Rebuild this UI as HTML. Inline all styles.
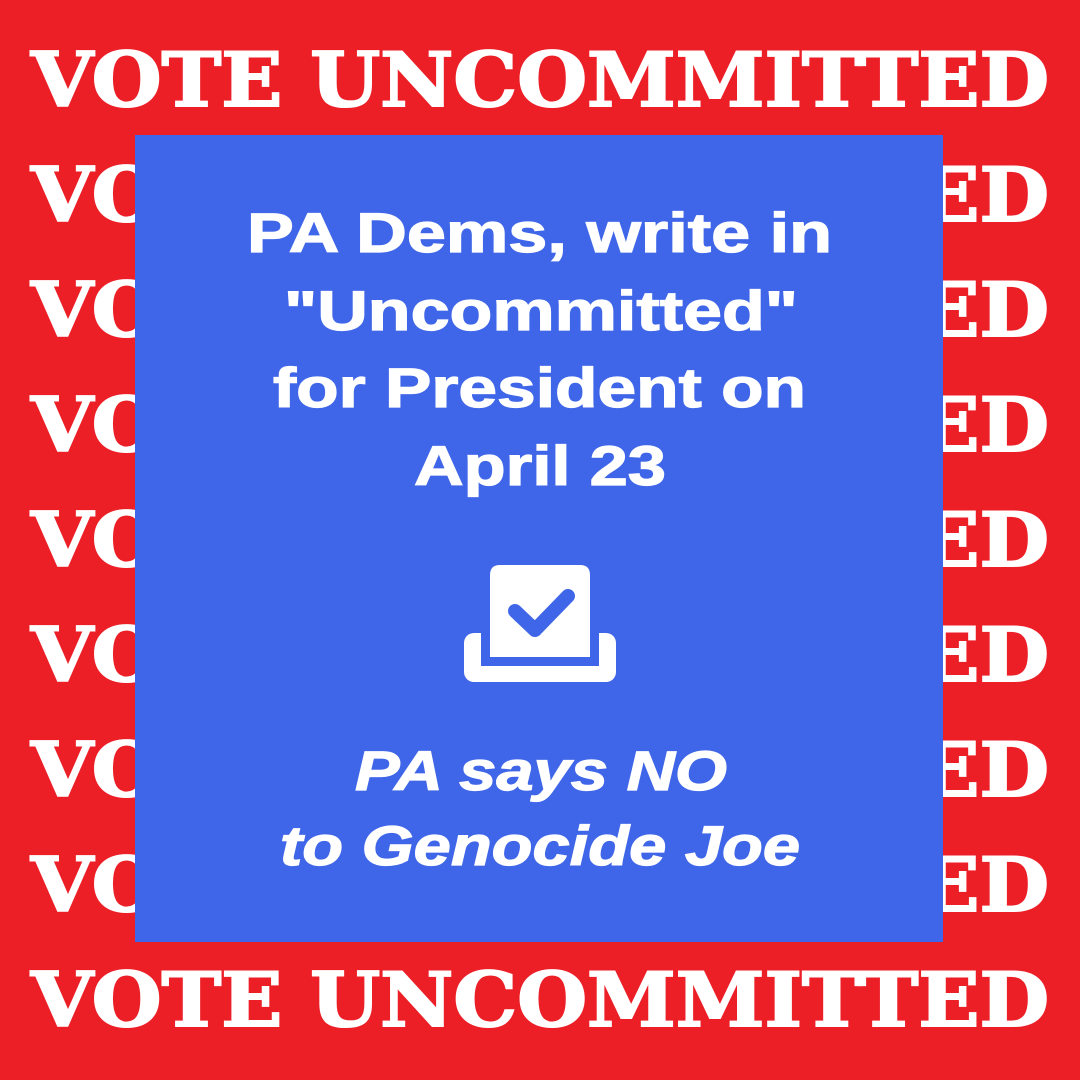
<!DOCTYPE html>
<html><head><meta charset="utf-8"><style>
html,body{margin:0;padding:0;width:1080px;height:1080px;overflow:hidden;background:#ec1f27}
</style></head><body>
<svg width="1080" height="1080" viewBox="0 0 1080 1080" xmlns="http://www.w3.org/2000/svg">
<rect width="1080" height="1080" fill="#ec1f27"/>
<g fill="#fff" stroke="#fff" stroke-width="2" font-family="DejaVu Serif, Liberation Serif, serif" font-weight="bold" font-size="75">
<text x="31" y="106" textLength="1018" lengthAdjust="spacingAndGlyphs">VOTE UNCOMMITTED</text>
<text x="31" y="221" textLength="1018" lengthAdjust="spacingAndGlyphs">VOTE UNCOMMITTED</text>
<text x="31" y="336" textLength="1018" lengthAdjust="spacingAndGlyphs">VOTE UNCOMMITTED</text>
<text x="31" y="451" textLength="1018" lengthAdjust="spacingAndGlyphs">VOTE UNCOMMITTED</text>
<text x="31" y="566" textLength="1018" lengthAdjust="spacingAndGlyphs">VOTE UNCOMMITTED</text>
<text x="31" y="681" textLength="1018" lengthAdjust="spacingAndGlyphs">VOTE UNCOMMITTED</text>
<text x="31" y="796" textLength="1018" lengthAdjust="spacingAndGlyphs">VOTE UNCOMMITTED</text>
<text x="31" y="911" textLength="1018" lengthAdjust="spacingAndGlyphs">VOTE UNCOMMITTED</text>
<text x="31" y="1026" textLength="1018" lengthAdjust="spacingAndGlyphs">VOTE UNCOMMITTED</text>
</g>
<rect x="135" y="135" width="808" height="807" fill="#3f66e8"/>
<g fill="#fff" stroke="#fff" stroke-width="1.2" font-family="Liberation Sans, sans-serif" font-weight="bold" font-size="56">
<text x="247" y="252" textLength="585" lengthAdjust="spacingAndGlyphs">PA Dems, write in</text>
<text x="284" y="330" textLength="514" lengthAdjust="spacingAndGlyphs">"Uncommitted"</text>
<text x="273" y="407" textLength="533" lengthAdjust="spacingAndGlyphs">for President on</text>
<text x="414" y="485" textLength="252" lengthAdjust="spacingAndGlyphs">April 23</text>
<g font-style="italic">
<text x="355" y="790" textLength="372" lengthAdjust="spacingAndGlyphs">PA says NO</text>
<text x="280" y="865" textLength="520" lengthAdjust="spacingAndGlyphs">to Genocide Joe</text>
</g>
</g>
<rect x="464" y="633" width="152" height="49" rx="10" fill="#fff"/>
<rect x="481" y="620" width="118" height="46" fill="#3f66e8"/>
<path d="M490 575 Q490 565 500 565 L580 565 Q590 565 590 575 L590 657 L490 657 Z" fill="#fff"/>
<path d="M515 611 L535 630 L568 596" fill="none" stroke="#3f66e8" stroke-width="14" stroke-linecap="round" stroke-linejoin="round"/>
</svg>
</body></html>
